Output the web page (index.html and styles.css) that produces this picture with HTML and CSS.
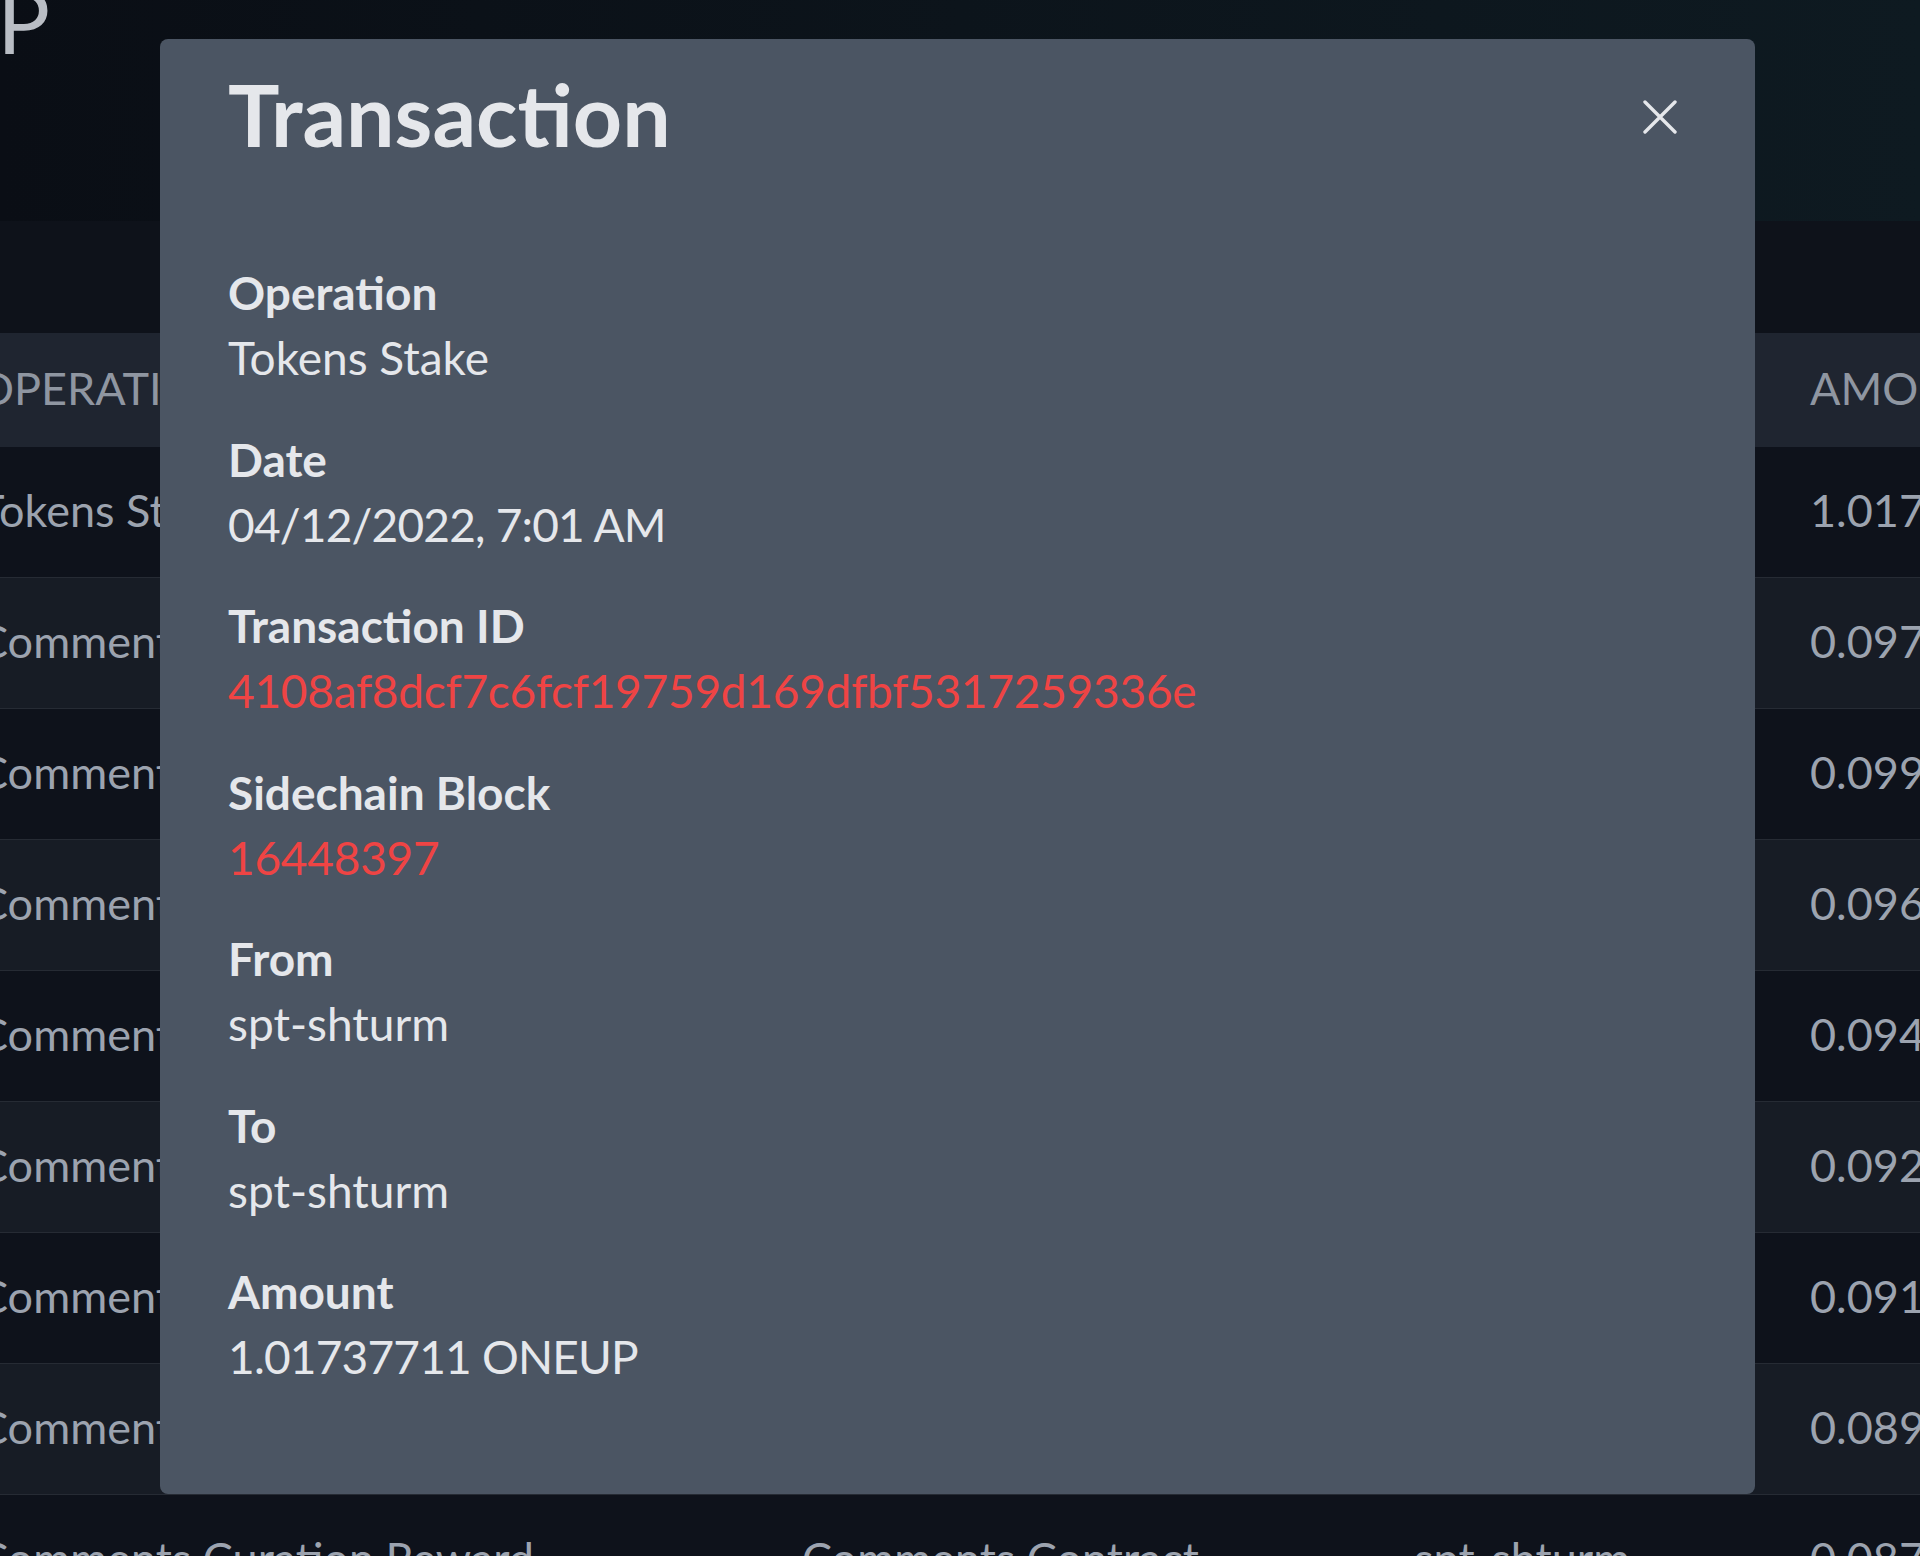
FILE: index.html
```html
<!DOCTYPE html>
<html>
  <head>
    <link rel="stylesheet" href="styles.css">
    <title>Transaction</title>
  </head>
  <body>
    <header class="topbar">
      <div class="brand"><span>ONEUP</span></div>
    </header>
    <div class="toolbar"></div>

    <!-- History table behind the modal -->
    <section class="history">
      <div class="row head">
        <div>Operation</div>
        <div>Contract</div>
        <div>Account</div>
        <div>Amount</div>
      </div>
      <div class="row">
        <div>Tokens Stake</div>
        <div>Tokens Contract</div>
        <div>spt-shturm</div>
        <div>1.01737711 ONEUP</div>
      </div>
      <div class="row alt">
        <div>Comments Curation Reward</div>
        <div>Comments Contract</div>
        <div>spt-shturm</div>
        <div>0.09712448 ONEUP</div>
      </div>
      <div class="row">
        <div>Comments Curation Reward</div>
        <div>Comments Contract</div>
        <div>spt-shturm</div>
        <div>0.09930511 ONEUP</div>
      </div>
      <div class="row alt">
        <div>Comments Curation Reward</div>
        <div>Comments Contract</div>
        <div>spt-shturm</div>
        <div>0.09647203 ONEUP</div>
      </div>
      <div class="row">
        <div>Comments Curation Reward</div>
        <div>Comments Contract</div>
        <div>spt-shturm</div>
        <div>0.09415870 ONEUP</div>
      </div>
      <div class="row alt">
        <div>Comments Curation Reward</div>
        <div>Comments Contract</div>
        <div>spt-shturm</div>
        <div>0.09268734 ONEUP</div>
      </div>
      <div class="row">
        <div>Comments Curation Reward</div>
        <div>Comments Contract</div>
        <div>spt-shturm</div>
        <div>0.09109326 ONEUP</div>
      </div>
      <div class="row alt">
        <div>Comments Curation Reward</div>
        <div>Comments Contract</div>
        <div>spt-shturm</div>
        <div>0.08951142 ONEUP</div>
      </div>
      <div class="row">
        <div>Comments Curation Reward</div>
        <div>Comments Contract</div>
        <div>spt-shturm</div>
        <div>0.08790215 ONEUP</div>
      </div>
    </section>

    <!-- Transaction modal -->
    <div class="modal">
      <div class="modal-header">
        <h2 class="modal-title">Transaction</h2>
        <button class="close" aria-label="Close">
          <svg width="34" height="34" viewBox="0 0 34 34">
            <path d="M2 2 L32 32 M32 2 L2 32" stroke="#e5e7eb" stroke-width="3.4" stroke-linecap="round" />
          </svg>
        </button>
      </div>
      <div class="modal-body">
        <div class="field">
          <div class="label">Operation</div>
          <div class="value">Tokens Stake</div>
        </div>
        <div class="field">
          <div class="label">Date</div>
          <div class="value tight">04/12/2022, 7:01 AM</div>
        </div>
        <div class="field">
          <div class="label">Transaction ID</div>
          <a class="value link" href="#">4108af8dcf7c6fcf19759d169dfbf5317259336e</a>
        </div>
        <div class="field">
          <div class="label">Sidechain Block</div>
          <a class="value link" href="#">16448397</a>
        </div>
        <div class="field">
          <div class="label">From</div>
          <div class="value">spt-shturm</div>
        </div>
        <div class="field">
          <div class="label">To</div>
          <div class="value">spt-shturm</div>
        </div>
        <div class="field">
          <div class="label">Amount</div>
          <div class="value tight">1.01737711 ONEUP</div>
        </div>
      </div>
    </div>
  </body>
</html>
```

FILE: styles.css
```css
/* RESETS */
*,
*::before,
*::after {
  box-sizing: border-box;
}
html,
body {
  margin: 0;
  height: 100%;
}
body {
  background: #0e121a;
  font-family: Lato, "Open Sans", sans-serif;
  overflow: hidden;
}
h2 {
  margin: 0;
}
button {
  border: none;
  margin: 0;
  padding: 0;
  background: transparent;
  color: inherit;
  font: inherit;
  cursor: pointer;
}

/* Page behind the modal */
.topbar {
  height: 221px;
  background: linear-gradient(90deg, #0a0e15, #0e1a21);
  overflow: hidden;
}
.brand {
  width: 50px;
  display: flex;
  justify-content: flex-end;
  white-space: nowrap;
  margin-top: -24px;
  font-size: 88px;
  font-weight: 400;
  line-height: 1;
  color: #b9bdc4;
}
.toolbar {
  height: 112px;
}
.history {
  overflow: hidden;
  font-size: 45px;
  color: #9ca3af;
}
.row {
  display: grid;
  grid-template-columns: 824px 612px 396px 1fr;
  margin-left: -70px;
  height: 131px;
  padding-bottom: 4px;
  align-items: center;
  background: #0e121b;
  border-bottom: 1px solid #262b34;
}
.row > div {
  padding-left: 48px;
  white-space: nowrap;
  overflow: hidden;
}
.row.alt {
  background: #171c25;
}
.row.head {
  height: 114px;
  background: #1f2530;
  border-bottom: none;
  text-transform: uppercase;
  color: #8f96a1;
}

/* Modal */
.modal {
  position: fixed;
  top: 39px;
  left: 160px;
  width: 1595px;
  background: #4b5563;
  border-radius: 8px;
  color: #e5e7eb;
}
.modal-header {
  display: flex;
  align-items: center;
  justify-content: space-between;
  padding: 23px 78px 0 68px;
}
.modal-title {
  font-size: 86px;
  font-weight: 700;
  line-height: 103px;
}
.close {
  display: flex;
  margin-top: 7px;
}
.modal-body {
  padding: 95px 68px 105px;
  font-size: 46px;
  line-height: 65px;
}
.field + .field {
  margin-top: 36.5px;
}
.label {
  font-weight: 700;
}
.value {
  display: block;
}
.tight {
  letter-spacing: -0.8px;
}
.link {
  color: #ef4444;
  text-decoration: none;
  letter-spacing: -0.25px;
}
```
